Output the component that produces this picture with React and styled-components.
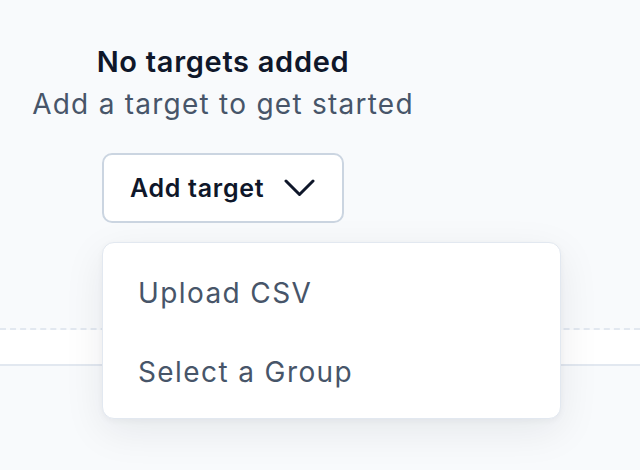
import React from "react";
import styled, { createGlobalStyle } from "styled-components";

const GlobalStyle = createGlobalStyle`
  html, body {
    margin: 0;
    padding: 0;
    background: #f8fafc;
    font-family: "Inter", "Noto Sans", sans-serif;
  }
`;

const Page = styled.div`
  position: relative;
  width: 640px;
  height: 470px;
  overflow: hidden;
  background: #f8fafc;
`;

const EmptyPanel = styled.section`
  border-bottom: 2px dashed #e2e8f0;
  padding: 41px 0 105px;
`;

const EmptyContent = styled.div`
  position: relative;
  width: 446px;
  display: flex;
  flex-direction: column;
  align-items: center;
`;

const Title = styled.h2`
  margin: 0;
  font-size: 29px;
  line-height: 42px;
  font-weight: 600;
  letter-spacing: 0.7px;
  color: #0f172a;
`;

const Subtitle = styled.p`
  margin: 0;
  font-size: 28px;
  line-height: 42px;
  font-weight: 400;
  letter-spacing: 1.25px;
  color: #475569;
`;

const TriggerButton = styled.button`
  margin-top: 28px;
  height: 70px;
  width: 242px;
  box-sizing: border-box;
  display: flex;
  align-items: center;
  gap: 20px;
  padding: 0 0 0 26px;
  background: #ffffff;
  border: 2px solid #cbd5e1;
  border-radius: 10px;
  font-family: inherit;
  font-size: 25px;
  font-weight: 600;
  letter-spacing: 0.7px;
  color: #0f172a;
  cursor: pointer;
`;

const Menu = styled.ul`
  position: absolute;
  top: 201px;
  left: 102px;
  width: 459px;
  height: 177px;
  box-sizing: border-box;
  margin: 0;
  padding: 10px 0 8px;
  list-style: none;
  background: #ffffff;
  border: 1px solid #e2e8f0;
  border-radius: 12px;
  box-shadow: 0 12px 40px rgba(15, 23, 42, 0.08), 0 2px 6px rgba(15, 23, 42, 0.04);
  z-index: 10;
`;

const MenuItem = styled.li`
  height: 79px;
  display: flex;
  align-items: center;
  padding-left: 35px;
  font-size: 28px;
  letter-spacing: 1.4px;
  color: #475569;
  cursor: pointer;
`;

const TableHeader = styled.div`
  height: 34px;
  background: #ffffff;
  border-bottom: 2px solid #e2e8f0;
`;

const Chevron = () => (
  <svg width="32" height="18" viewBox="0 0 32 18" fill="none">
    <path
      d="M2 2L15.5 15.5L29 2"
      stroke="#0f172a"
      strokeWidth="3"
      strokeLinecap="round"
      strokeLinejoin="round"
    />
  </svg>
);

export default function App() {
  return (
    <Page>
      <GlobalStyle />
      <EmptyPanel>
        <EmptyContent>
          <Title>No targets added</Title>
          <Subtitle>Add a target to get started</Subtitle>
          <TriggerButton>
            Add target
            <Chevron />
          </TriggerButton>
          <Menu>
            <MenuItem>Upload CSV</MenuItem>
            <MenuItem>Select a Group</MenuItem>
          </Menu>
        </EmptyContent>
      </EmptyPanel>
      <TableHeader />
    </Page>
  );
}
